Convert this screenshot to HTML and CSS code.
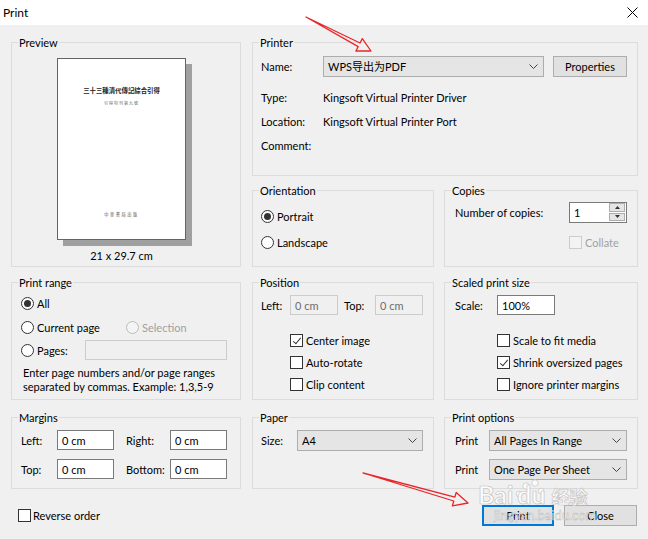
FILE: index.html
```html
<!DOCTYPE html>
<html>
<head lang="en">
    <meta charset="UTF-8">
    <title>Print</title>
    <link rel="stylesheet" href="styles.css">
</head>
<body>
<div class="titlebar">
    <span>Print</span>
    <svg class="close" width="11" height="11" viewBox="0 0 11 11"><path d="M0.5 0.5L10.5 10.5M10.5 0.5L0.5 10.5" stroke="#000" stroke-width="1"/></svg>
</div>

<div class="dialog">
    <fieldset class="grp preview">
        <legend>Preview</legend>
        <div class="sheet">
            <div class="page">
                <div class="pg-title">三十三種清代傳記綜合引得</div>
                <div class="pg-sub">引得特刊第九號</div>
                <div class="pg-foot">中華書局出版</div>
            </div>
            <div class="size">21 x 29.7 cm</div>
        </div>
    </fieldset>

    <fieldset class="grp printer">
        <legend>Printer</legend>
        <div class="body">
            <div class="row name-row">
                <span class="lbl" style="width:62px">Name:</span>
                <div class="combo printer-sel"><span>WPS导出为PDF</span><svg class="chev" width="9" height="5" viewBox="0 0 9 5"><polyline points="0.5,0.5 4.5,4.5 8.5,0.5" fill="none" stroke="#444"/></svg></div>
                <div class="btn props">Properties</div>
            </div>
            <div class="row info first"><span class="lbl" style="width:62px">Type:</span><span>Kingsoft Virtual Printer Driver</span></div>
            <div class="row info"><span class="lbl" style="width:62px">Location:</span><span>Kingsoft Virtual Printer Port</span></div>
            <div class="row info"><span class="lbl" style="width:62px">Comment:</span></div>
        </div>
    </fieldset>

    <fieldset class="grp orient">
        <legend>Orientation</legend>
        <div class="body">
            <div class="row opt"><span class="radio on"></span><span>Portrait</span></div>
            <div class="row opt"><span class="radio"></span><span>Landscape</span></div>
        </div>
    </fieldset>

    <fieldset class="grp copies">
        <legend>Copies</legend>
        <div class="body">
            <div class="row copies-row">
                <span class="lbl" style="width:114px">Number of copies:</span>
                <div class="field spin"><span>1</span>
                    <div class="spinbtns">
                        <div class="sb"><svg width="5" height="3" viewBox="0 0 5 3"><polygon points="2.5,0 5,3 0,3" fill="#333"/></svg></div>
                        <div class="sb"><svg width="5" height="3" viewBox="0 0 5 3"><polygon points="0,0 5,0 2.5,3" fill="#333"/></svg></div>
                    </div>
                </div>
            </div>
            <div class="row collate-row"><span class="chk off"></span><span class="dim">Collate</span></div>
        </div>
    </fieldset>

    <fieldset class="grp range">
        <legend>Print range</legend>
        <div class="body">
            <div class="row r24"><span class="radio on"></span><span>All</span></div>
            <div class="row r24">
                <div class="row" style="width:105px"><span class="radio"></span><span>Current page</span></div>
                <span class="radio off"></span><span class="dim">Selection</span>
            </div>
            <div class="row r22">
                <div class="row" style="width:64px"><span class="radio"></span><span>Pages:</span></div>
                <div class="field off pages"></div>
            </div>
            <div class="help">Enter page numbers and/or page ranges<br>separated by commas. Example: 1,3,5-9</div>
        </div>
    </fieldset>

    <fieldset class="grp position">
        <legend>Position</legend>
        <div class="body">
            <div class="row r22">
                <span class="lbl" style="width:29px">Left:</span>
                <div class="field off small">0 cm</div>
                <span class="lbl" style="width:31px;margin-left:6px">Top:</span>
                <div class="field off small">0 cm</div>
            </div>
            <div class="checks" style="margin-left:29px">
                <div class="row r22"><span class="chk on"></span><span>Center image</span></div>
                <div class="row r22"><span class="chk"></span><span>Auto-rotate</span></div>
                <div class="row r22"><span class="chk"></span><span>Clip content</span></div>
            </div>
        </div>
    </fieldset>

    <fieldset class="grp scaled">
        <legend>Scaled print size</legend>
        <div class="body">
            <div class="row r22">
                <span class="lbl" style="width:42px">Scale:</span>
                <div class="field scale">100%</div>
            </div>
            <div class="checks" style="margin-left:42px">
                <div class="row r22"><span class="chk"></span><span>Scale to fit media</span></div>
                <div class="row r22"><span class="chk on"></span><span>Shrink oversized pages</span></div>
                <div class="row r22"><span class="chk"></span><span>Ignore printer margins</span></div>
            </div>
        </div>
    </fieldset>

    <fieldset class="grp margins">
        <legend>Margins</legend>
        <div class="body">
            <div class="row r22">
                <span class="lbl" style="width:36px">Left:</span>
                <div class="field mfield">0 cm</div>
                <span class="lbl" style="width:44px;margin-left:12px">Right:</span>
                <div class="field mfield">0 cm</div>
            </div>
            <div class="row r22 gap7">
                <span class="lbl" style="width:36px">Top:</span>
                <div class="field mfield">0 cm</div>
                <span class="lbl" style="width:44px;margin-left:12px">Bottom:</span>
                <div class="field mfield">0 cm</div>
            </div>
        </div>
    </fieldset>

    <fieldset class="grp paper">
        <legend>Paper</legend>
        <div class="body">
            <div class="row r22">
                <span class="lbl" style="width:36px">Size:</span>
                <div class="combo paper-sel"><span>A4</span><svg class="chev" width="9" height="5" viewBox="0 0 9 5"><polyline points="0.5,0.5 4.5,4.5 8.5,0.5" fill="none" stroke="#444"/></svg></div>
            </div>
        </div>
    </fieldset>

    <fieldset class="grp options">
        <legend>Print options</legend>
        <div class="body">
            <div class="row r22">
                <span class="lbl" style="width:34px">Print</span>
                <div class="combo opt-sel"><span>All Pages In Range</span><svg class="chev" width="9" height="5" viewBox="0 0 9 5"><polyline points="0.5,0.5 4.5,4.5 8.5,0.5" fill="none" stroke="#444"/></svg></div>
            </div>
            <div class="row r22 gap7">
                <span class="lbl" style="width:34px">Print</span>
                <div class="combo opt-sel"><span>One Page Per Sheet</span><svg class="chev" width="9" height="5" viewBox="0 0 9 5"><polyline points="0.5,0.5 4.5,4.5 8.5,0.5" fill="none" stroke="#444"/></svg></div>
            </div>
        </div>
    </fieldset>
</div>

<div class="footer">
    <span class="chk"></span><span class="rev">Reverse order</span>
    <div class="btns">
        <div class="btn default">Print</div>
        <div class="btn close-btn">Close</div>
    </div>
</div>

<!-- annotations drawn over the screenshot -->
<svg class="marks" width="648" height="539" viewBox="0 0 648 539">
    <polygon points="306,17 360,43 362.3,38.6 371,51 355.9,51 358.2,46.6" fill="none" stroke="#e8262a" stroke-width="1.3" stroke-linejoin="round"/>
    <polygon points="363,473 454.9,497.2 456.2,492.4 468,503 452.4,505.8 453.8,501" fill="none" stroke="#e8262a" stroke-width="1.3" stroke-linejoin="round"/>
    <g fill="#fff" fill-opacity="0.8" stroke="#c8c8c8" stroke-width="0.8">
        <circle cx="526" cy="486" r="3.2"/>
        <circle cx="535" cy="483" r="3.2"/>
        <circle cx="519" cy="494" r="2.8"/>
        <circle cx="541" cy="491" r="2.8"/>
    </g>
</svg>
<div class="wm">
    <span class="wm-logo">Bai<span class="wm-gap"></span>du</span><span class="wm-cn">经验</span>
</div>
<div class="wm-url">jingyan.baidu.com</div>
</body>
</html>
```

FILE: styles.css
```css
* {
    box-sizing: border-box;
}
body {
    margin: 0;
    width: 648px;
    height: 539px;
    overflow: hidden;
    position: relative;
    background: #f0f0f0;
    font-family: Lato, "Noto Sans CJK SC", sans-serif;
    font-size: 11px;
    color: #000;
}
.titlebar {
    height: 25px;
    background: #fff;
    display: flex;
    align-items: center;
    justify-content: space-between;
    padding: 0 10px 0 3px;
    font-size: 12px;
}

/* main grid of group boxes */
.dialog {
    display: grid;
    padding: 10px 0 0 11px;
    grid-template-columns: 230px 11px 182px 10px 194px;
    grid-template-rows: 141px 7px 84px 8px 125px 10px 79px;
    grid-template-areas:
        "prev . printer printer printer"
        "prev . . . ."
        "prev . orient . copies"
        ". . . . ."
        "range . pos . scaled"
        ". . . . ."
        "margins . paper . options";
}
.preview { grid-area: prev; }
.printer { grid-area: printer; }
.orient { grid-area: orient; }
.copies { grid-area: copies; }
.range { grid-area: range; }
.position { grid-area: pos; }
.scaled { grid-area: scaled; }
.margins { grid-area: margins; }
.paper { grid-area: paper; }
.options { grid-area: options; }

.grp {
    margin: 0;
    padding: 0;
    min-width: 0;
    border: 1px solid #dcdcdc;
}
.grp legend {
    padding: 0 1px;
    margin-left: 6px;
    line-height: 15px;
}
.row {
    display: flex;
    align-items: center;
}
.lbl {
    flex: none;
}
.r22 { height: 22px; }
.r24 { height: 24px; }
.gap7 { margin-top: 7px; }
.dim { color: #a0a0a0; }

/* controls */
.combo {
    height: 21px;
    display: flex;
    align-items: center;
    padding: 0 5px 0 4px;
    background: #e5e5e5;
    border: 1px solid #adadad;
}
.combo .chev {
    margin-left: auto;
}
.btn {
    height: 21px;
    display: flex;
    align-items: center;
    justify-content: center;
    background: #e1e1e1;
    border: 1px solid #adadad;
}
.field {
    height: 20px;
    display: flex;
    align-items: center;
    padding-left: 4px;
    background: #fff;
    border: 1px solid #7a7a7a;
}
.field.off {
    background: #f0f0f0;
    border-color: #cccccc;
    color: #6d6d6d;
}
.chk {
    flex: none;
    position: relative;
    width: 13px;
    height: 13px;
    margin-right: 3px;
    background: #fff;
    border: 1px solid #333;
}
.chk.on::after {
    content: "";
    position: absolute;
    left: 4px;
    top: 1px;
    width: 3px;
    height: 7px;
    border: solid #333;
    border-width: 0 1px 1px 0;
    transform: rotate(40deg);
}
.chk.off {
    border-color: #cccccc;
    background: #f3f3f3;
}
.radio {
    flex: none;
    width: 13px;
    height: 13px;
    margin-right: 3px;
    border-radius: 50%;
    background: #fff;
    border: 1px solid #333;
    display: flex;
    align-items: center;
    justify-content: center;
}
.radio.on::after {
    content: "";
    width: 7px;
    height: 7px;
    border-radius: 50%;
    background: #333;
}
.radio.off {
    border-color: #bcbcbc;
    background: #f4f4f4;
}

/* preview */
.sheet {
    width: 129px;
    margin: 8px 0 0 45px;
}
.page {
    height: 182px;
    background: #fff;
    border: 1px solid #646464;
    box-shadow: 6px 6px 0 #a0a0a0;
    display: flex;
    flex-direction: column;
    align-items: center;
    font-family: "Noto Sans CJK TC", sans-serif;
}
.pg-title {
    margin-top: 28px;
    font-size: 6.4px;
    font-weight: bold;
    line-height: 8px;
    color: #222;
}
.pg-sub {
    margin-top: 5px;
    font-size: 4px;
    letter-spacing: 1px;
    color: #666;
}
.pg-foot {
    margin-top: auto;
    margin-bottom: 22px;
    font-size: 4.2px;
    letter-spacing: 1.6px;
    color: #555;
}
.size {
    margin-top: 8px;
    line-height: 16px;
    text-align: center;
}

/* printer */
.printer .body { padding: 5px 0 0 8px; }
.name-row { height: 22px; }
.printer-sel { width: 221px; }
.props { width: 74px; margin-left: 9px; }
.info { height: 24px; }
.info.first { margin-top: 8px; }

/* orientation & copies */
.orient .body { padding: 5px 0 0 8px; }
.opt { height: 26px; }
.copies .body { padding: 3px 0 0 10px; }
.copies-row { height: 22px; }
.spin {
    width: 58px;
    height: 21px;
    padding-right: 1px;
}
.spinbtns {
    margin-left: auto;
    width: 16px;
    display: flex;
    flex-direction: column;
    gap: 1px;
}
.sb {
    height: 8.5px;
    display: flex;
    align-items: center;
    justify-content: center;
    background: #e5e5e5;
    border: 1px solid #adadad;
}
.collate-row {
    height: 24px;
    margin-top: 7px;
    padding-left: 114px;
}

/* print range */
.range .body { padding: 1px 0 0 9px; }
.pages { width: 142px; }
.help {
    margin-top: 5px;
    padding-left: 2px;
    line-height: 14px;
}

/* position & scale */
.position .body { padding: 4px 0 0 8px; }
.scaled .body { padding: 4px 0 0 10px; }
.small { width: 48px; }
.scale { width: 58px; }
.checks { margin-top: 13px; }

/* margins, paper, options */
.margins .body { padding: 4px 0 0 9px; }
.mfield { width: 57px; }
.paper .body { padding: 4px 0 0 8px; }
.paper-sel { width: 126px; }
.options .body { padding: 4px 0 0 10px; }
.opt-sel { width: 138px; }

/* footer */
.footer {
    display: flex;
    align-items: center;
    height: 21px;
    margin-top: 16px;
    padding-left: 18px;
}
.rev { margin-left: -1px; }
.btns {
    margin-left: auto;
    margin-right: 11px;
    display: flex;
    gap: 10px;
}
.default {
    width: 72px;
    border: 2px solid #0078d7;
}
.close-btn { width: 73px; }

/* overlays: annotation arrows and watermark */
.marks {
    position: absolute;
    left: 0;
    top: 0;
    pointer-events: none;
}
.wm {
    position: absolute;
    left: 478px;
    top: 482px;
    display: flex;
    align-items: baseline;
    gap: 6px;
    color: rgba(255, 255, 255, 0.85);
    -webkit-text-stroke: 0.7px #c4c4c4;
    font-family: Lato, "Noto Sans CJK SC", sans-serif;
    font-weight: bold;
}
.wm-logo { font-size: 25px; line-height: 25px; }
.wm-gap { display: inline-block; width: 4px; }
.wm-cn { font-size: 18px; }
.wm-url {
    position: absolute;
    left: 494px;
    top: 507px;
    font-size: 13px;
    color: rgba(255, 255, 255, 0.7);
    -webkit-text-stroke: 0.4px #b0b0b0;
}
```
